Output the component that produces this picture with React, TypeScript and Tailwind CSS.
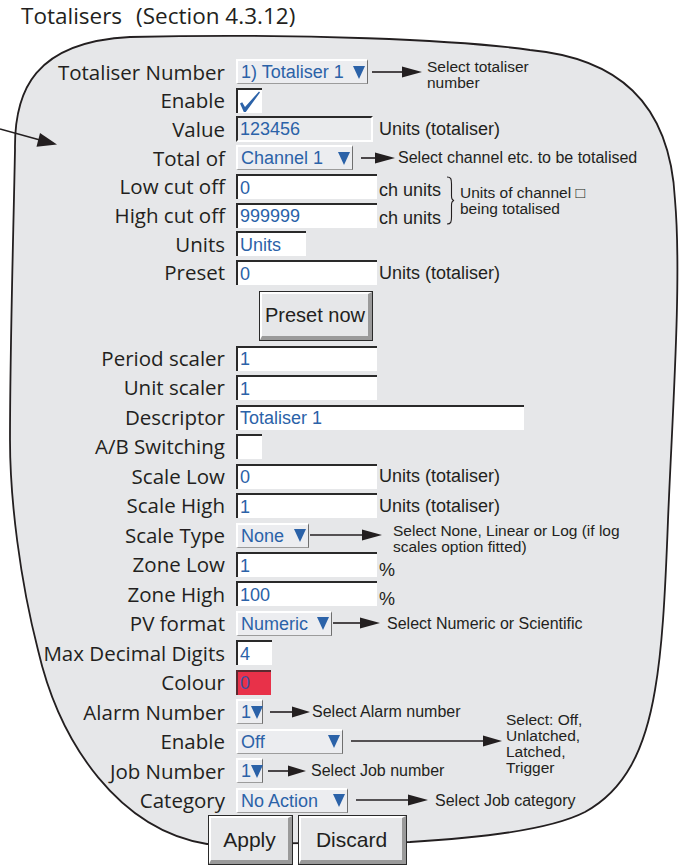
import React from "react";

const LABEL =
  "w-[225px] shrink-0 text-right whitespace-nowrap font-['Open_Sans',sans-serif] text-[20.5px] text-[#231f20] leading-none";
const VAL = "font-['Liberation_Sans',Arial,sans-serif] text-[18px] leading-none whitespace-nowrap";
const UNIT =
  "font-['Liberation_Sans',Arial,sans-serif] text-[18px] text-[#231f20] leading-none whitespace-nowrap";
const NOTE =
  "font-['Liberation_Sans',Arial,sans-serif] text-[16px] text-[#231f20] leading-[15px] whitespace-nowrap";
const MULTI =
  "font-['Liberation_Sans',Arial,sans-serif] text-[15.5px] text-[#231f20] leading-[16px] whitespace-nowrap";
const FIELD =
  "h-[25px] shrink-0 bg-white border-t-2 border-l-2 border-[#2a2a2a] pl-[2px] flex items-center text-[#2b62a8]";
const TOP = "h-[28.7px]";
const LOW = "h-[29.47px]";

const Row = ({ label, h, children }: { label: string; h: string; children?: React.ReactNode }) => (
  <div className={"flex items-center " + h}>
    <div className={LABEL}>{label}</div>
    <div className="ml-[11px] flex items-center">{children}</div>
  </div>
);

const Field = ({ value, w }: { value: string; w: string }) => (
  <div className={FIELD + " " + w}>
    <span className={VAL}>{value}</span>
  </div>
);

const Select = ({ value, w }: { value: string; w: string }) => (
  <div
    className={
      "h-[25px] shrink-0 flex items-center justify-between pl-[3px] pr-[2px] bg-[#ecedf0] border-t-2 border-l-2 border-r border-b border-t-white border-l-white border-r-[#6f6f6f] border-b-[#9c9c9c] text-[#2b62a8] " +
      w
    }
  >
    <span className={VAL}>{value}</span>
    <svg width="12" height="13" viewBox="0 0 12 13" className="shrink-0">
      <polygon points="0,0 12,0 6,13" fill="#2b62a8" />
    </svg>
  </div>
);

const Check = ({ checked }: { checked?: boolean }) => (
  <div className="w-[26px] h-[25px] shrink-0 bg-white border-t-2 border-l-2 border-[#2a2a2a]">
    {checked && (
      <svg width="24" height="23" viewBox="0 0 24 23">
        <path d="M2,13.5 L4.2,12.2 L7,17 L21,1.5 L22,2.4 L7.8,22 L5.8,22 Z" fill="#2b62a8" />
      </svg>
    )}
  </div>
);

const Arrow = ({ w, head = 20 }: { w: number; head?: number }) => (
  <svg width={w} height="12" viewBox={`0 0 ${w} 12`} className="shrink-0">
    <line x1="0" y1="6" x2={w - head + 2} y2="6" stroke="#231f20" strokeWidth="1.6" />
    <polygon points={`${w - head},0.5 ${w},6 ${w - head},11.5`} fill="#231f20" />
  </svg>
);

const Btn = ({ text, w, size }: { text: string; w: string; size: string }) => (
  <div className={"h-[50px] shrink-0 border border-[#2a2a2a] bg-[#e6e7e9] " + w}>
    <div className="h-full border-t-2 border-l-2 border-r-4 border-b-4 border-t-white border-l-white border-r-[#9a9a9a] border-b-[#9a9a9a] flex items-center justify-center">
      <span className={"font-['Liberation_Sans',Arial,sans-serif] text-[#231f20] leading-none " + size}>{text}</span>
    </div>
  </div>
);

export default function App() {
  return (
    <div className="relative w-[685px] h-[866px] bg-white overflow-hidden">
      <svg className="absolute top-0 left-0 pointer-events-none" width="685" height="866" viewBox="0 0 685 866">
        <path
          d="M15,150 C14,90 35,42 130,37 C300,33 460,40 530,50 C615,58 670,100 675,200 C682,280 672,420 668,520 C665,600 662,650 655,690 C645,750 625,790 585,812 C550,830 480,838 410,842 L207,844 C120,830 60,745 38,650 C20,580 10,500 10,440 C10,350 13,250 15,150 Z"
          fill="#e6e7e9"
          stroke="#231f20"
          strokeWidth="1.8"
        />
        <line x1="0" y1="129" x2="40" y2="140" stroke="#231f20" strokeWidth="1.6" />
        <polygon points="40,133 57,144.5 36.5,146.7" fill="#231f20" />
      </svg>

      <div className="relative">
        <div className="h-[31px] pl-[21px] leading-[31px] font-['Open_Sans',sans-serif] text-[22.5px] text-[#231f20] whitespace-nowrap">
          Totalisers<span className="ml-[14px]">(Section 4.3.12)</span>
        </div>

        <div className="pt-[26.5px]">
          <Row label="Totaliser Number" h={TOP}>
            <Select value="1) Totaliser 1" w="w-[132px]" />
            <div className="ml-[4px] flex">
              <Arrow w={50} />
            </div>
            <div className={MULTI + " ml-[5px] mt-[7px]"}>
              Select totaliser
              <br />
              number
            </div>
          </Row>
          <Row label="Enable" h={TOP}>
            <Check checked />
          </Row>
          <Row label="Value" h={TOP}>
            <div className="h-[26px] w-[137px] shrink-0 bg-[#eaebed] border-2 border-t-[#2a2a2a] border-l-[#2a2a2a] border-r-white border-b-white pl-[2px] flex items-center text-[#2b62a8]">
              <span className={VAL}>123456</span>
            </div>
            <span className={UNIT + " ml-[6px]"}>Units (totaliser)</span>
          </Row>
          <Row label="Total of" h={TOP}>
            <Select value="Channel 1" w="w-[117px]" />
            <div className="ml-[8px] flex">
              <Arrow w={34} />
            </div>
            <div className={NOTE + " ml-[3px]"}>Select channel etc. to be totalised</div>
          </Row>

          <div className="flex items-center">
            <div className="w-[445px] shrink-0">
              <Row label="Low cut off" h={TOP}>
                <Field value="0" w="w-[141px]" />
                <span className={UNIT + " ml-[2px] mt-[6px]"}>ch units</span>
              </Row>
              <Row label="High cut off" h={TOP}>
                <Field value="999999" w="w-[141px]" />
                <span className={UNIT + " ml-[2px] mt-[6px]"}>ch units</span>
              </Row>
            </div>
            <svg width="9" height="49" viewBox="0 0 9 49" className="ml-[1px] shrink-0">
              <path
                d="M1,1 C5,1 5.5,3 5.5,8 L5.5,20 C5.5,23 6,24 8,24.5 C6,25 5.5,26 5.5,29 L5.5,41 C5.5,46 5,48 1,48"
                fill="none"
                stroke="#231f20"
                strokeWidth="1.1"
              />
            </svg>
            <div className={MULTI + " ml-[5px]"}>
              Units of channel □
              <br />
              being totalised
            </div>
          </div>

          <Row label="Units" h={TOP}>
            <Field value="Units" w="w-[70px]" />
          </Row>
          <Row label="Preset" h={TOP}>
            <Field value="0" w="w-[141px]" />
            <span className={UNIT + " ml-[2px]"}>Units (totaliser)</span>
          </Row>

          <div className="pl-[259px] pt-[4px] pb-[2.5px] flex">
            <Btn text="Preset now" w="w-[114px]" size="text-[20px]" />
          </div>

          <Row label="Period scaler" h={LOW}>
            <Field value="1" w="w-[141px]" />
          </Row>
          <Row label="Unit scaler" h={LOW}>
            <Field value="1" w="w-[141px]" />
          </Row>
          <Row label="Descriptor" h={LOW}>
            <Field value="Totaliser 1" w="w-[288px]" />
          </Row>
          <Row label="A/B Switching" h={LOW}>
            <Check />
          </Row>
          <Row label="Scale Low" h={LOW}>
            <Field value="0" w="w-[141px]" />
            <span className={UNIT + " ml-[2px]"}>Units (totaliser)</span>
          </Row>
          <Row label="Scale High" h={LOW}>
            <Field value="1" w="w-[141px]" />
            <span className={UNIT + " ml-[2px]"}>Units (totaliser)</span>
          </Row>
          <Row label="Scale Type" h={LOW}>
            <Select value="None" w="w-[73px]" />
            <div className="ml-[1px] flex">
              <Arrow w={72} />
            </div>
            <div className={MULTI + " ml-[11px] mt-[8px]"}>
              Select None, Linear or Log (if log
              <br />
              scales option fitted)
            </div>
          </Row>
          <Row label="Zone Low" h={LOW}>
            <Field value="1" w="w-[141px]" />
            <span className={UNIT + " ml-[2px] mt-[10px]"}>%</span>
          </Row>
          <Row label="Zone High" h={LOW}>
            <Field value="100" w="w-[141px]" />
            <span className={UNIT + " ml-[2px] mt-[10px]"}>%</span>
          </Row>
          <Row label="PV format" h={LOW}>
            <Select value="Numeric" w="w-[96px]" />
            <div className="ml-[1px] flex">
              <Arrow w={47} />
            </div>
            <div className={NOTE + " ml-[7px]"}>Select Numeric or Scientific</div>
          </Row>
          <Row label="Max Decimal Digits" h={LOW}>
            <Field value="4" w="w-[36px]" />
          </Row>
          <Row label="Colour" h={LOW}>
            <div className="h-[25px] w-[35px] shrink-0 bg-[#e83149] border-t-2 border-l-2 border-[#5a2a30] pl-[2px] flex items-center text-[#3d4fa0]">
              <span className={VAL}>0</span>
            </div>
          </Row>
          <Row label="Alarm Number" h={LOW}>
            <Select value="1" w="w-[27px]" />
            <div className="ml-[7px] flex">
              <Arrow w={40} head={18} />
            </div>
            <div className={NOTE + " ml-[2px]"}>Select Alarm number</div>
          </Row>
          <Row label="Enable" h={LOW}>
            <Select value="Off" w="w-[107px]" />
            <div className="ml-[8px] flex">
              <Arrow w={151} head={19} />
            </div>
            <div className={MULTI + " ml-[4px] mt-[6px]"}>
              Select: Off,
              <br />
              Unlatched,
              <br />
              Latched,
              <br />
              Trigger
            </div>
          </Row>
          <Row label="Job Number" h={LOW}>
            <Select value="1" w="w-[27px]" />
            <div className="ml-[5px] flex">
              <Arrow w={38} head={18} />
            </div>
            <div className={NOTE + " ml-[5px]"}>Select Job number</div>
          </Row>
          <Row label="Category" h={LOW}>
            <Select value="No Action" w="w-[112px]" />
            <div className="ml-[8px] flex">
              <Arrow w={72} />
            </div>
            <div className={NOTE + " ml-[7px]"}>Select Job category</div>
          </Row>

          <div className="pl-[208px] flex gap-[5px]">
            <Btn text="Apply" w="w-[85px]" size="text-[21px]" />
            <Btn text="Discard" w="w-[109px]" size="text-[21px]" />
          </div>
        </div>
      </div>
    </div>
  );
}
